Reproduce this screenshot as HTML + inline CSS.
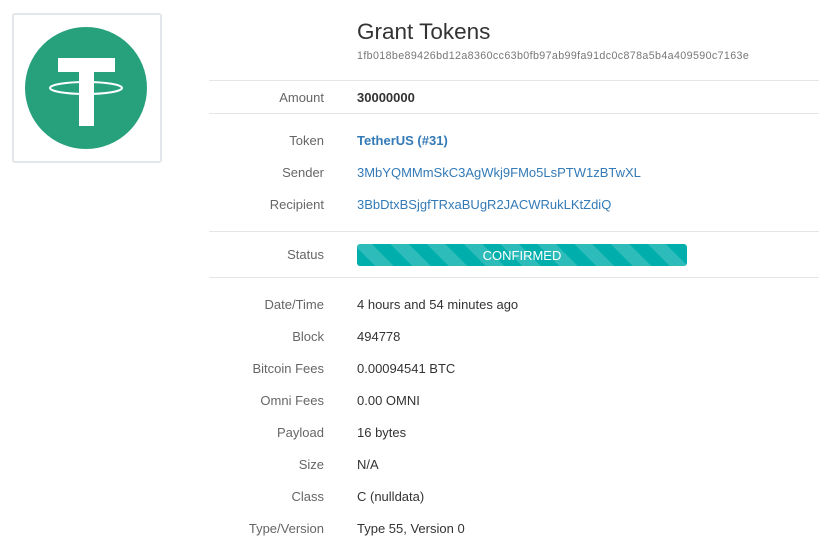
<!DOCTYPE html>
<html><head><style>
body{margin:0;width:819px;height:556px;background:#fff;font-family:"Liberation Sans",sans-serif;position:relative;overflow:hidden;color:#333}
.box{position:absolute;left:12px;top:13px;width:146px;height:146px;border:2px solid #e3e6ea;border-radius:3px}
.hr{position:absolute;left:209px;width:610px;height:1px;background:#e5e5e5}
.l{position:absolute;right:495px;font-size:13px;color:#666;text-align:right;white-space:nowrap}
.v{position:absolute;left:357px;font-size:13px;color:#333;white-space:nowrap}
a{color:#337ab7;text-decoration:none}
.bar{position:absolute;left:357px;top:244px;width:330px;height:22px;border-radius:3px;background:#00aeac repeating-linear-gradient(45deg,#00aeac 0 13px,#2dbcb9 13px 26px);color:#fff;font-size:13px;text-align:center;line-height:23px}
</style></head><body>
<div class="box"></div>
<svg style="position:absolute;left:0;top:0" width="200" height="170">
<circle cx="86" cy="88" r="61" fill="#27a17c"/>
<rect x="58" y="58" width="57" height="14" fill="#fff"/>
<rect x="79" y="72" width="15" height="54" fill="#fff"/>
<ellipse cx="86" cy="88" rx="36" ry="6" fill="none" stroke="#fff" stroke-width="2"/>
</svg>
<div style="position:absolute;left:357px;top:19px;font-size:22.5px;color:#333">Grant Tokens</div>
<div style="position:absolute;left:357px;top:50px;font-size:10.7px;letter-spacing:0.37px;color:#777">1fb018be89426bd12a8360cc63b0fb97ab99fa91dc0c878a5b4a409590c7163e</div>
<div class="hr" style="top:80px"></div>
<div class="l" style="top:90px">Amount</div><div class="v" style="top:90px;font-weight:bold">30000000</div>
<div class="hr" style="top:113px"></div>
<div class="l" style="top:133px">Token</div><div class="v" style="top:133px;font-weight:bold"><a>TetherUS (#31)</a></div>
<div class="l" style="top:165px">Sender</div><div class="v" style="top:165px"><a>3MbYQMMmSkC3AgWkj9FMo5LsPTW1zBTwXL</a></div>
<div class="l" style="top:197px">Recipient</div><div class="v" style="top:197px"><a>3BbDtxBSjgfTRxaBUgR2JACWRukLKtZdiQ</a></div>
<div class="hr" style="top:231px"></div>
<div class="l" style="top:247px">Status</div><div class="bar">CONFIRMED</div>
<div class="hr" style="top:277px"></div>
<div class="l" style="top:297px">Date/Time</div><div class="v" style="top:297px">4 hours and 54 minutes ago</div>
<div class="l" style="top:329px">Block</div><div class="v" style="top:329px">494778</div>
<div class="l" style="top:361px">Bitcoin Fees</div><div class="v" style="top:361px">0.00094541 BTC</div>
<div class="l" style="top:393px">Omni Fees</div><div class="v" style="top:393px">0.00 OMNI</div>
<div class="l" style="top:425px">Payload</div><div class="v" style="top:425px">16 bytes</div>
<div class="l" style="top:457px">Size</div><div class="v" style="top:457px">N/A</div>
<div class="l" style="top:489px">Class</div><div class="v" style="top:489px">C (nulldata)</div>
<div class="l" style="top:521px">Type/Version</div><div class="v" style="top:521px">Type 55, Version 0</div>
</body></html>
